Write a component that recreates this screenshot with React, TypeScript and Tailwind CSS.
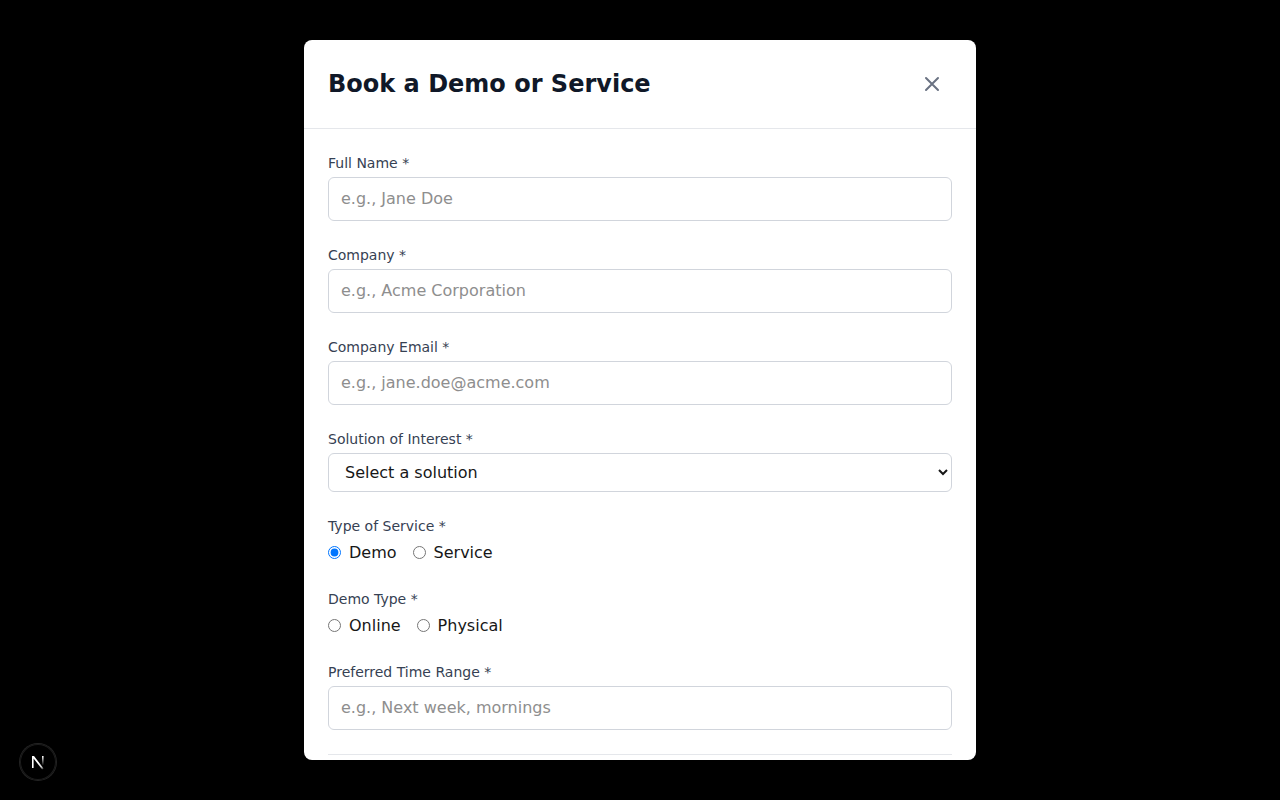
import { useState } from "react";

const fieldClass =
  "block w-full rounded-md border border-gray-300 px-3 py-2 text-base leading-[26px] text-gray-900 placeholder:text-[#8e8e8e]";
const labelClass = "mb-1 block text-sm text-gray-700";

function TextField({ id, label, placeholder, type = "text" }: { id: string; label: string; placeholder: string; type?: string }) {
  return (
    <div>
      <label htmlFor={id} className={labelClass}>{label}</label>
      <input id={id} type={type} placeholder={placeholder} className={fieldClass} />
    </div>
  );
}

function RadioGroup({ name, label, options, initial }: { name: string; label: string; options: string[]; initial?: string }) {
  const [value, setValue] = useState(initial);
  return (
    <fieldset>
      <legend className={labelClass}>{label}</legend>
      <div className="flex gap-4">
        {options.map((option) => (
          <label key={option} className="flex items-center gap-2 leading-[25px]">
            <input type="radio" name={name} checked={value === option} onChange={() => setValue(option)} />
            {option}
          </label>
        ))}
      </div>
    </fieldset>
  );
}

export default function App() {
  return (
    <div className="flex h-screen items-center justify-center bg-black p-4 font-['DejaVu_Sans',sans-serif] text-[#171717]">
      <div role="dialog" aria-labelledby="title" className="flex max-h-[90vh] w-full max-w-2xl flex-col overflow-hidden rounded-lg bg-white">
        <header className="flex shrink-0 items-center justify-between border-b border-gray-200 p-6">
          <h2 id="title" className="text-2xl font-bold text-gray-900">Book a Demo or Service</h2>
          <button type="button" aria-label="Close" className="p-2 text-gray-500">
            <svg className="size-6" viewBox="0 0 24 24" fill="none" stroke="currentColor" strokeWidth="2" strokeLinecap="round" strokeLinejoin="round">
              <path d="M6 18L18 6M6 6l12 12" />
            </svg>
          </button>
        </header>
        <form className="min-h-0 space-y-6 overflow-y-auto p-6 [scrollbar-width:none]">
          <TextField id="name" label="Full Name *" placeholder="e.g., Jane Doe" />
          <TextField id="company" label="Company *" placeholder="e.g., Acme Corporation" />
          <TextField id="email" type="email" label="Company Email *" placeholder="e.g., jane.doe@acme.com" />
          <div>
            <label htmlFor="solution" className={labelClass}>Solution of Interest *</label>
            <select id="solution" className="block w-full rounded-md border border-gray-300 bg-white px-3 py-2 text-base">
              <option>Select a solution</option>
            </select>
          </div>
          <RadioGroup name="service" label="Type of Service *" options={["Demo", "Service"]} initial="Demo" />
          <RadioGroup name="demo" label="Demo Type *" options={["Online", "Physical"]} />
          <TextField id="time" label="Preferred Time Range *" placeholder="e.g., Next week, mornings" />
          <hr className="border-gray-200" />
        </form>
      </div>
      <button type="button" aria-label="Open developer tools" className="fixed bottom-5 left-5 flex size-9 items-center justify-center rounded-full bg-black ring-1 ring-[#242424] inset-ring-1 inset-ring-[#1c1c1c]">
        <svg className="size-5" viewBox="0 0 20 20" fill="none">
          <defs>
            <linearGradient id="diagonal" x1="10.5" y1="11" x2="15.5" y2="17.5" gradientUnits="userSpaceOnUse">
              <stop stopColor="white" /><stop offset="0.6" stopColor="white" stopOpacity="0.8" /><stop offset="1" stopColor="white" stopOpacity="0.1" />
            </linearGradient>
            <linearGradient id="stem" x1="15" y1="4" x2="15" y2="13.5" gradientUnits="userSpaceOnUse">
              <stop stopColor="white" /><stop offset="1" stopColor="white" stopOpacity="0" />
            </linearGradient>
          </defs>
          <path d="M4 4H6L15.6 16.4L14.2 17.6L5.6 6.6V16H4Z" fill="url(#diagonal)" />
          <path d="M14 4H15.6V13.5H14Z" fill="url(#stem)" />
        </svg>
      </button>
    </div>
  );
}
